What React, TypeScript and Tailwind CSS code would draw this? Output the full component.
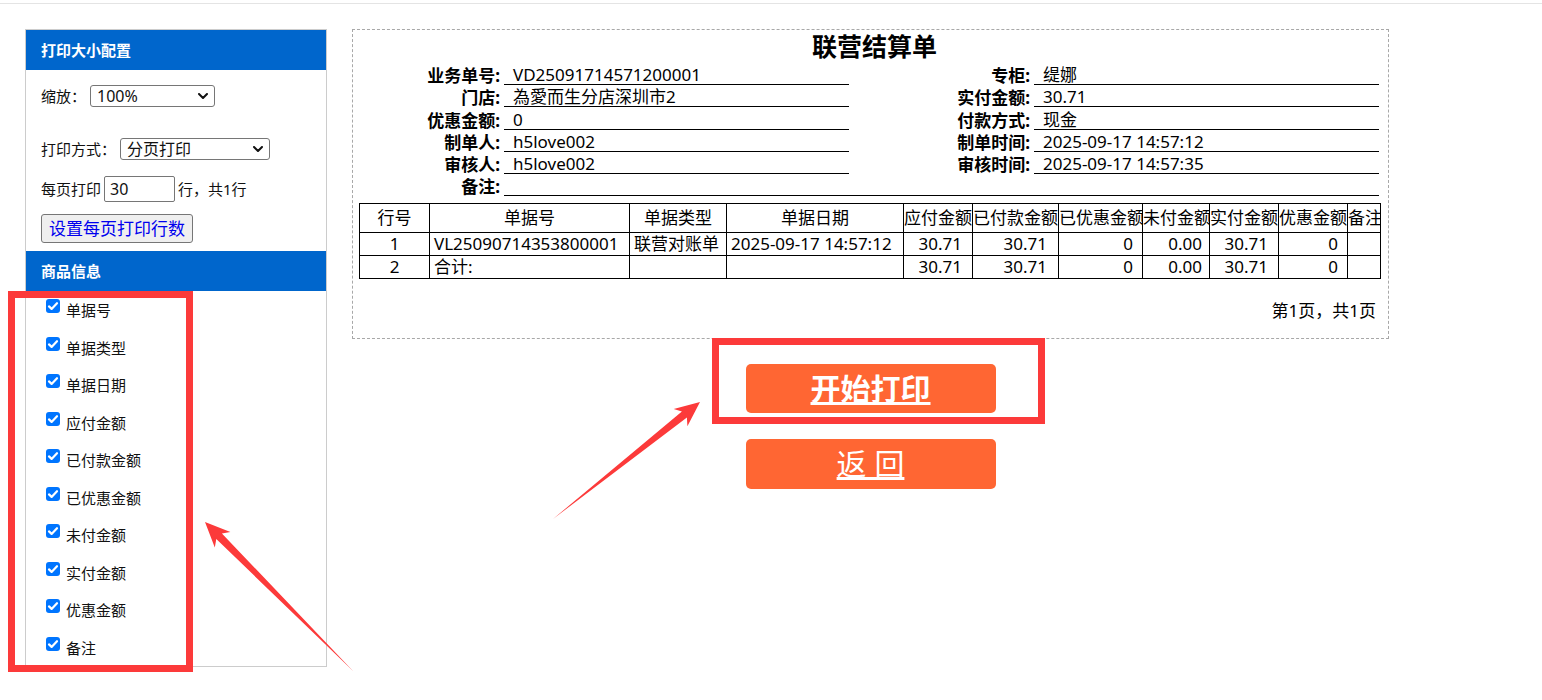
import React from 'react';

const leftInfo = [
  { label: '业务单号', value: 'VD25091714571200001' },
  { label: '门店', value: '為愛而生分店深圳市2' },
  { label: '优惠金额', value: '0' },
  { label: '制单人', value: 'h5love002' },
  { label: '审核人', value: 'h5love002' },
];

const rightInfo = [
  { label: '专柜', value: '缇娜' },
  { label: '实付金额', value: '30.71' },
  { label: '付款方式', value: '现金' },
  { label: '制单时间', value: '2025-09-17 14:57:12' },
  { label: '审核时间', value: '2025-09-17 14:57:35' },
];

const fields = [
  '单据号',
  '单据类型',
  '单据日期',
  '应付金额',
  '已付款金额',
  '已优惠金额',
  '未付金额',
  '实付金额',
  '优惠金额',
  '备注',
];

const CheckBox = () => (
  <span className="w-[14px] h-[14px] rounded-[3px] bg-[#0075ff] flex items-center justify-center shrink-0">
    <svg viewBox="0 0 14 14" className="w-[14px] h-[14px]">
      <path d="M3 7.4l2.6 2.5L11 4.2" stroke="white" strokeWidth="2.2" fill="none" strokeLinecap="round" strokeLinejoin="round" />
    </svg>
  </span>
);

const Chevron = () => (
  <svg viewBox="0 0 10 6" className="w-[10px] h-[6px]">
    <path d="M1 1l4 4 4-4" stroke="#111" strokeWidth="2" fill="none" strokeLinecap="round" strokeLinejoin="round" />
  </svg>
);

const FakeSelect = ({ value, width }: { value: string; width: string }) => (
  <div className={`${width} h-[22px] border border-[#767676] rounded-[3px] bg-white flex items-center justify-between pl-[6px] pr-[6px] text-[16px] leading-[20px]`}>
    <span>{value}</span>
    <Chevron />
  </div>
);

const SidePanel = () => (
  <div className="w-[302px] h-[638px] ml-[25px] border border-[#cccccc] bg-white shrink-0">
    <div className="h-[40px] bg-[#0066cc] text-white font-bold text-[15px] flex items-center pl-[15px]">打印大小配置</div>

    <div className="pl-[15px] pt-[15px] text-[15px] text-[#111]">
      <div className="flex items-center h-[22px]">
        <span className="w-[49px]">缩放：</span>
        <FakeSelect value="100%" width="w-[125px]" />
      </div>
      <div className="flex items-center h-[22px] mt-[31px]">
        <span className="w-[79px]">打印方式：</span>
        <FakeSelect value="分页打印" width="w-[150px]" />
      </div>
      <div className="flex items-center h-[26px] mt-[16px]">
        <span className="w-[63px]">每页打印</span>
        <input
          defaultValue="30"
          className="w-[71px] h-[26px] border border-[#767676] rounded-[2px] bg-white pl-[5px] text-[16px] outline-none"
        />
        <span className="ml-[3px]">行，共1行</span>
      </div>
      <button className="mt-[12px] w-[152px] h-[29px] border border-[#767676] rounded-[3px] bg-[#efefef] text-[#0000ee] text-[17px] leading-[20px]">
        设置每页打印行数
      </button>
    </div>

    <div className="mt-[8px] h-[40px] bg-[#0066cc] text-white font-bold text-[15px] flex items-center pl-[15px]">商品信息</div>

    <div className="pt-[8px] pl-[20px] text-[15px] text-[#111]">
      {fields.map((f) => (
        <div key={f} className="h-[37.5px] flex items-start">
          <CheckBox />
          <span className="ml-[6px] leading-[20px] mt-[1px]">{f}</span>
        </div>
      ))}
    </div>
  </div>
);

const InfoLabel = ({ text }: { text: string }) => (
  <div className="flex items-end justify-end pr-[4px] font-bold leading-[19px]">{text}:</div>
);

const InfoValue = ({ text, span }: { text: string; span?: boolean }) => (
  <div className={`flex items-end border-b border-black pl-[9px] leading-[19px] ${span ? 'col-span-3' : ''}`}>{text}</div>
);

const cols = [70, 200, 97, 177, 69, 86, 84, 67, 69, 69, 33];
const heads = ['行号', '单据号', '单据类型', '单据日期', '应付金额', '已付款金额', '已优惠金额', '未付金额', '实付金额', '优惠金额', '备注'];

const rows = [
  ['1', 'VL25090714353800001', '联营对账单', '2025-09-17 14:57:12', '30.71', '30.71', '0', '0.00', '30.71', '0', ''],
  ['2', '合计:', '', '', '30.71', '30.71', '0', '0.00', '30.71', '0', ''],
];

const cellClass = [
  'text-center',
  'text-left pl-[4px]',
  'text-left pl-[4px]',
  'text-left pl-[4px]',
  'text-right pr-[10px]',
  'text-right pr-[11px]',
  'text-right pr-[9px]',
  'text-right pr-[7px]',
  'text-right pr-[10px]',
  'text-right pr-[9px]',
  '',
];

const Preview = () => (
  <div className="w-[1037px] h-[310px] border border-dashed border-[#a8a8a8] pl-[6px] text-[17px] text-black">
    <div className="h-[33px] leading-[33px] text-center text-[25px] font-bold pl-[2px]">联营结算单</div>

    <div className="grid grid-cols-[145px_345px_185px_345px] auto-rows-[22.2px] w-[1020px]">
      {leftInfo.map((l, i) => (
        <React.Fragment key={l.label}>
          <InfoLabel text={l.label} />
          <InfoValue text={l.value} />
          <InfoLabel text={rightInfo[i].label} />
          <InfoValue text={rightInfo[i].value} />
        </React.Fragment>
      ))}
      <InfoLabel text="备注" />
      <InfoValue text="" span />
    </div>

    <table className="mt-[7px] w-[1021px] table-fixed border-collapse">
      <colgroup>
        {cols.map((w, i) => (
          <col key={i} style={{ width: w }} />
        ))}
      </colgroup>
      <thead>
        <tr>
          {heads.map((h) => (
            <th key={h} className="border border-black h-[29px] p-0 font-normal text-center leading-[20px] whitespace-nowrap overflow-hidden">
              {h}
            </th>
          ))}
        </tr>
      </thead>
      <tbody>
        {rows.map((r, ri) => (
          <tr key={ri}>
            {r.map((c, ci) => (
              <td key={ci} className={`border border-black h-[23px] py-0 leading-[20px] whitespace-nowrap ${cellClass[ci]}`}>
                {c}
              </td>
            ))}
          </tr>
        ))}
      </tbody>
    </table>

    <div className="mt-[22px] text-right pr-[12px] leading-[20px]">第1页，共1页</div>
  </div>
);

const Annotations = () => (
  <svg className="absolute left-0 top-0 w-[1542px] h-[700px] pointer-events-none" viewBox="0 0 1542 700">
    <rect x="11.5" y="294.5" width="178" height="374" fill="none" stroke="#fc3a3a" strokeWidth="7" />
    <rect x="715.5" y="341.5" width="326" height="79" fill="none" stroke="#fc3a3a" strokeWidth="7" />
    <polygon points="353,671 221.9,533.4 230.4,532 205,522 214.8,547.5 216.3,539" fill="#fc3a3a" />
    <polygon points="553,519 686.9,417.6 687.4,426.2 700,402 673.7,409 681.9,411.4" fill="#fc3a3a" />
  </svg>
);

export default function App() {
  return (
    <div className="relative w-full h-[700px] overflow-hidden bg-white pt-[3px] font-[family-name:'Noto_Sans','Noto_Sans_CJK_SC',sans-serif]">
      <div className="h-px bg-[#e4e4e4]" />
      <div className="flex items-start pt-[25px]">
        <SidePanel />
        <div className="ml-[25px] flex flex-col items-center">
          <Preview />
          <button className="mt-[25px] w-[250px] h-[49px] rounded-[5px] bg-[#ff6633] text-white text-[30px] font-bold underline leading-[36px]">
            开始打印
          </button>
          <button className="mt-[26px] w-[250px] h-[50px] rounded-[5px] bg-[#ff6633] text-white text-[30px] underline leading-[36px]">
            返 回
          </button>
        </div>
      </div>
      <Annotations />
    </div>
  );
}
